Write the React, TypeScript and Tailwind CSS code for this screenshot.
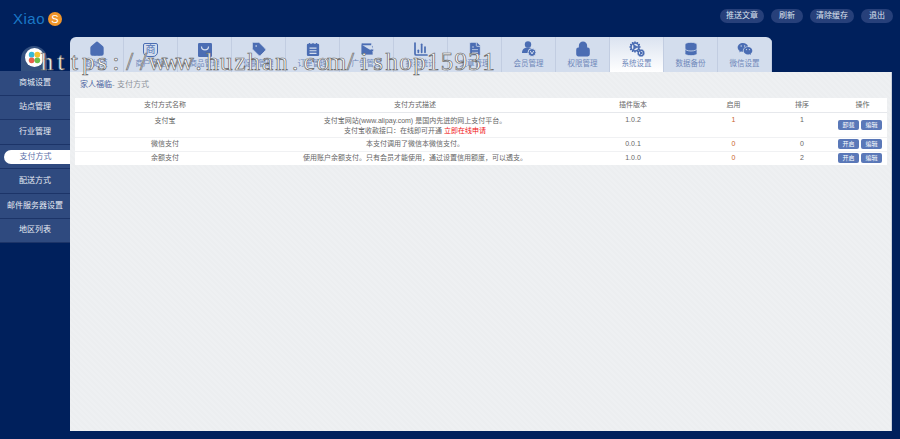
import React from 'react';
import { House, Tag, Wallet, ChartColumn, FileText, Lock, Cog, Database } from 'lucide-react';
import { RiWechatFill } from 'react-icons/ri';

const ico = 'w-[16px] h-[16px] text-[#4b6db3]';
const watermark = 'https://www.huzhan.com/ishop15931';

const tabs: { label: string; icon: React.ReactNode; active?: boolean }[] = [
  { label: '起始页', icon: <House className={ico} fill="currentColor" stroke="currentColor" /> },
  {
    label: '商户管理',
    icon: (
      <span className="w-[15px] h-[14px] rounded-b-[5px] rounded-t-[2px] border border-[#4b6db3] text-[#4b6db3] text-[10px] leading-[12px] text-center">
        商
      </span>
    ),
  },
  {
    label: '商品管理',
    icon: (
      <svg viewBox="0 0 16 16" className="w-[14px] h-[14px]">
        <rect width="16" height="16" rx="1.5" fill="#4b6db3" />
        <path d="M4 4c0 5 8 5 8 0" fill="none" stroke="#d3dded" strokeWidth="1.4" />
      </svg>
    ),
  },
  { label: '促销管理', icon: <Tag className={ico} fill="currentColor" stroke="#d3dded" strokeWidth={1.2} /> },
  {
    label: '订单管理',
    icon: (
      <svg viewBox="0 0 16 16" className="w-[14px] h-[16px]">
        <rect x="1" y="2" width="14" height="14" rx="1.5" fill="#4b6db3" />
        <path d="M4 1v3M8 1v3M12 1v3" stroke="#4b6db3" strokeWidth="1.4" />
        <path d="M4 7h8M4 10h8M4 13h8" stroke="#d3dded" strokeWidth="1.2" />
      </svg>
    ),
  },
  { label: '广告管理', icon: <Wallet className={ico} fill="currentColor" stroke="#d3dded" strokeWidth={1.2} /> },
  { label: '报表统计', icon: <ChartColumn className={ico} strokeWidth={2.6} /> },
  { label: '文章管理', icon: <FileText className={ico} fill="currentColor" stroke="#d3dded" strokeWidth={1.2} /> },
  {
    label: '会员管理',
    icon: (
      <svg viewBox="0 0 16 16" className="w-[16px] h-[16px]">
        <circle cx="7" cy="3.5" r="3.2" fill="#4b6db3" />
        <path d="M1 12c0-4 2.5-5.5 6-5.5s6 1.500 6 5.500z" fill="#4b6db3" />
        <circle cx="11" cy="11.500" r="4" fill="#4b6db3" stroke="#d3dded" />
        <path d="M9.300 10l1.700 3 1.700-3" fill="none" stroke="#d3dded" strokeWidth="1" />
      </svg>
    ),
  },
  { label: '权限管理', icon: <Lock className={ico} fill="currentColor" stroke="#4b6db3" strokeWidth={2.4} /> },
  {
    label: '系统设置',
    active: true,
    icon: (
      <span className="relative w-[16px] h-[16px]">
        <Cog className="w-[12px] h-[12px] text-[#4b6db3]" strokeWidth={3} />
        <Cog className="absolute right-0 bottom-0 w-[8px] h-[8px] text-[#4b6db3]" strokeWidth={3.4} />
      </span>
    ),
  },
  { label: '数据备份', icon: <Database className={ico} fill="currentColor" stroke="#d3dded" strokeWidth={1.2} /> },
  { label: '微信设置', icon: <RiWechatFill className={ico} /> },
];

const menu = ['商城设置', '站点管理', '行业管理', '支付方式', '配送方式', '邮件服务器设置', '地区列表'];

function Btn({ children }: { children: React.ReactNode }) {
  return (
    <span className="w-[21px] h-[10px] rounded-[2px] bg-[#5a78b8] text-white text-[6px] leading-[10px] text-center">
      {children}
    </span>
  );
}

function Ops({ first }: { first: string }) {
  return (
    <div className="flex gap-[2px] pl-[10px]">
      <Btn>{first}</Btn>
      <Btn>编辑</Btn>
    </div>
  );
}

export default function App() {
  return (
    <div className="relative w-[900px] h-[439px] overflow-hidden bg-[#00205c] font-['Liberation_Sans','Noto_Sans_CJK_SC',sans-serif]">
      <header className="h-[37px] flex items-start justify-between pl-[13px] pr-[7px] pt-[9px]">
        <div className="flex items-center gap-[3px]">
          <span className="text-[15px] leading-[20px] tracking-[0.5px] font-light text-[#1b78c6]">Xiao</span>
          <span className="w-[14px] h-[14px] rounded-full bg-[#f0952a] text-white text-[11px] leading-[14px] text-center">S</span>
        </div>
        <div className="flex gap-[7px] text-[8px] leading-[14px] text-[#dde3ef]">
          <span className="w-[44px] rounded-full bg-[#27407a] text-center">推送文章</span>
          <span className="w-[32px] rounded-full bg-[#27407a] text-center">刷新</span>
          <span className="w-[44px] rounded-full bg-[#27407a] text-center">清除缓存</span>
          <span className="w-[32px] rounded-full bg-[#27407a] text-center">退出</span>
        </div>
      </header>

      <div className="flex">
        <aside className="w-[70px] shrink-0">
          <div className="h-[34px] flex justify-center items-end pr-[2px]">
            <div className="w-[26px] h-[25px] rounded-t-full bg-[#33507f] flex justify-center pt-[2px]">
              <svg viewBox="0 0 20 20" className="w-[19px] h-[19px]">
                <circle cx="10" cy="10" r="10" fill="#fff" />
                <circle cx="7" cy="7" r="3" fill="#36b8d8" />
                <circle cx="13" cy="7" r="3" fill="#f2c230" />
                <circle cx="7" cy="13" r="3" fill="#e8604c" />
                <circle cx="13" cy="13" r="3" fill="#6cbf4b" />
              </svg>
            </div>
          </div>
          <nav className="flex flex-col">
            {menu.map((m) => (
              <div key={m} className="h-[24.6px] bg-[#2f4a7f] border-b border-[#1c3468] flex items-center pl-[4px]">
                {m === '支付方式' ? (
                  <span className="w-full h-[14px] rounded-l-full bg-white text-[#5a6fa8] text-[8px] leading-[14px] text-center pr-[3px]">
                    {m}
                  </span>
                ) : (
                  <span className="w-full text-[8px] text-[#e6eaf3] text-center pr-[4px]">{m}</span>
                )}
              </div>
            ))}
          </nav>
        </aside>

        <main className="w-[822px]">
          <nav className="w-[702px] h-[35px] flex rounded-t-[6px] overflow-hidden bg-[#d3dded]">
            {tabs.map((t) => (
              <div
                key={t.label}
                className={`w-[54px] flex flex-col items-center justify-end pb-[4px] gap-[2px] border-r border-[#c2cde1] ${
                  t.active ? 'bg-gradient-to-b from-[#dbe3f0] to-white' : ''
                }`}
              >
                {t.icon}
                <span className="text-[7.5px] leading-[9px] text-[#6f88ba]">{t.label}</span>
              </div>
            ))}
          </nav>
          <section className="h-[359px] bg-[repeating-linear-gradient(45deg,#eef0f2_0,#eef0f2_2px,#eceef0_2px,#eceef0_4px)] px-[5px] border-r border-[#c9d0dc]">
            <div className="h-[26px] flex items-center pl-[5px] text-[8px]">
              <span className="text-[#4a63a0]">家人福临</span>
              <span className="text-[#8d929b]">- 支付方式</span>
            </div>
            <table className="w-[812px] table-fixed bg-white text-[7px] leading-[10px] text-[#666] text-center">
              <colgroup>
                <col className="w-[180px]" />
                <col className="w-[320px]" />
                <col className="w-[116px]" />
                <col className="w-[85px]" />
                <col className="w-[52px]" />
                <col className="w-[59px]" />
              </colgroup>
              <thead>
                <tr className="h-[14px] border-b border-[#e6e8ec]">
                  <th className="font-normal">支付方式名称</th>
                  <th className="font-normal">支付方式描述</th>
                  <th className="font-normal">插件版本</th>
                  <th className="font-normal">启用</th>
                  <th className="font-normal">排序</th>
                  <th className="font-normal pl-[10px]">操作</th>
                </tr>
              </thead>
              <tbody>
                <tr className="h-[25px] border-b border-[#f0f1f3] align-top">
                  <td className="pt-[3px]">支付宝</td>
                  <td className="pt-[3px]">
                    支付宝网站(www.alipay.com) 是国内先进的网上支付平台。
                    <br />
                    支付宝收款接口：在线即可开通 <span className="text-[#f01414]">立即在线申请</span>
                  </td>
                  <td className="pt-[2px]">1.0.2</td>
                  <td className="pt-[2px] text-[#c8642a]">1</td>
                  <td className="pt-[2px]">1</td>
                  <td className="pt-[7px]"><Ops first="卸载" /></td>
                </tr>
                <tr className="h-[14px] border-b border-[#f0f1f3]">
                  <td>微信支付</td>
                  <td>本支付调用了微信本微信支付。</td>
                  <td>0.0.1</td>
                  <td className="text-[#c8642a]">0</td>
                  <td>0</td>
                  <td><Ops first="开启" /></td>
                </tr>
                <tr className="h-[14px]">
                  <td>余额支付</td>
                  <td>使用账户余额支付。只有会员才能使用，通过设置信用额度，可以透支。</td>
                  <td>1.0.0</td>
                  <td className="text-[#c8642a]">0</td>
                  <td>2</td>
                  <td><Ops first="开启" /></td>
                </tr>
              </tbody>
            </table>
          </section>
        </main>
      </div>

      <div className="absolute left-[40px] top-[47px] flex text-[25px] leading-[30px] whitespace-nowrap font-['Liberation_Serif',serif] text-white [-webkit-text-stroke:0.7px_#666]">
        {watermark.split('').map((c, i) => (
          <span key={i} className="w-[13.8px] flex justify-center">{c}</span>
        ))}
      </div>
    </div>
  );
}
